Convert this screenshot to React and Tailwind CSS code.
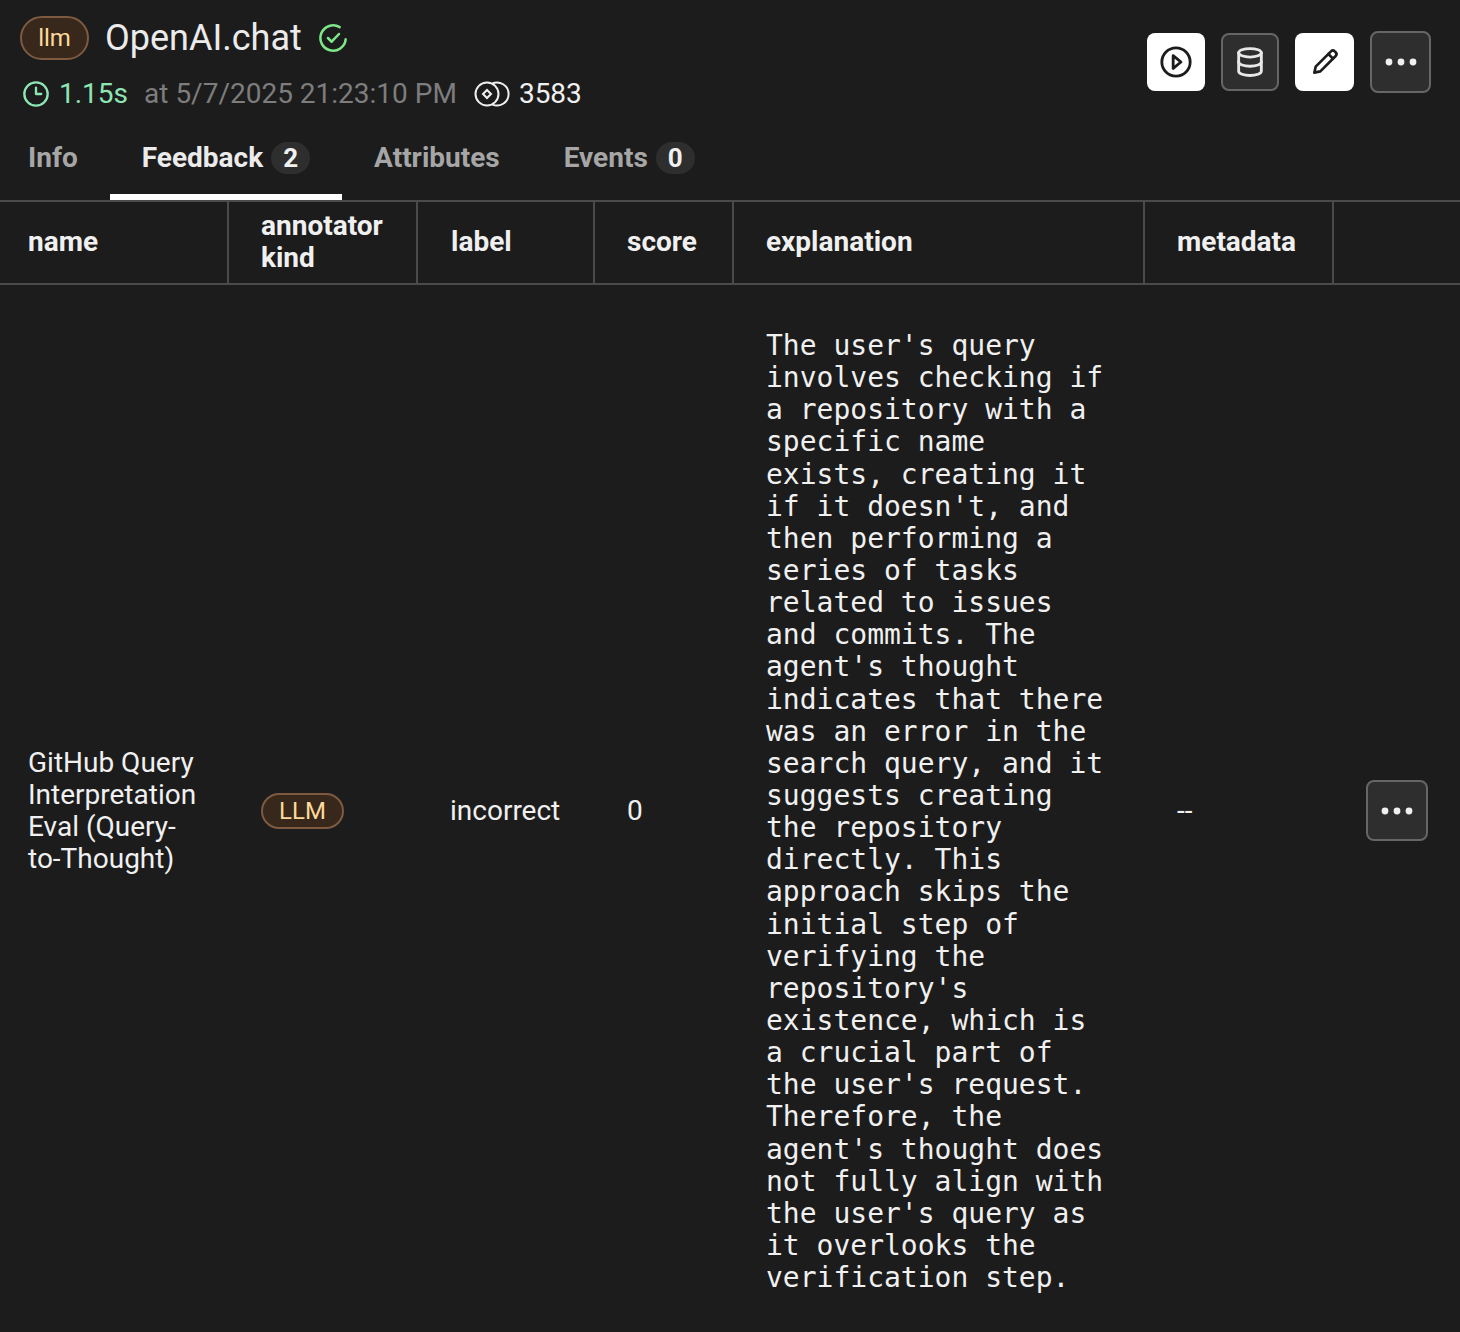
const explanation = `The user's query involves checking if a repository with a specific name exists, creating it if it doesn't, and then performing a series of tasks related to issues and commits. The agent's thought indicates that there was an error in the search query, and it suggests creating the repository directly. This approach skips the initial step of verifying the repository's existence, which is a crucial part of the user's request. Therefore, the agent's thought does not fully align with the user's query as it overlooks the verification step.`;

function Dots() {
  return (
    <svg width="32" height="32" viewBox="0 0 32 32" fill="#f0f0f0">
      <circle cx="4" cy="16" r="3.4" />
      <circle cx="16" cy="16" r="3.4" />
      <circle cx="28" cy="16" r="3.4" />
    </svg>
  );
}

function Pill({ children, className }) {
  return (
    <span className={`inline-flex items-center justify-center rounded-full border-2 border-[#7d5a40] bg-[#38281c] text-[#ffd99a] ${className}`}>
      {children}
    </span>
  );
}

function Count({ n }) {
  return (
    <span className="ml-2 flex h-8 w-[39px] items-center justify-center rounded-full bg-[#2e2e2e] text-[26px] text-[#f0f0f0]">{n}</span>
  );
}

const Th = ({ className, children }) => (
  <th className={`border-r-2 border-[#4a4a4a] px-8 pt-0.5 pb-1 text-left align-middle font-bold text-[#f0f0f0] ${className}`}>{children}</th>
);

export default function App() {
  return (
    <div className="min-h-[1332px] overflow-hidden bg-[#1c1c1c] text-[28px] leading-8 text-[#f0f0f0]" style={{ fontFamily: "Roboto, sans-serif" }}>
      <header className="flex h-[123px] items-start justify-between pl-5 pr-[29px] pt-4">
        <div>
          <div className="flex h-11 items-center">
            <Pill className="h-11 w-[69px] text-[24px]">llm</Pill>
            <h1 className="ml-4 text-[36px] font-normal leading-11 text-[#ebebeb]">OpenAI.chat</h1>
            <svg className="ml-[15px]" width="32" height="32" viewBox="0 0 24 24" fill="none" stroke="#7ee787" strokeWidth="1.9" strokeLinecap="round" strokeLinejoin="round">
              <path d="M21.5 13A9.5 9.5 0 1 1 17 3.9" />
              <path d="M8.2 12l2.8 2.8 5.5-5.8" />
            </svg>
          </div>
          <div className="mt-[18px] flex h-8 items-center pl-0.5">
            <svg width="28" height="28" viewBox="0 0 24 24" fill="none" stroke="#8ee6b4" strokeWidth="2" strokeLinecap="round" strokeLinejoin="round">
              <circle cx="12" cy="12" r="10" />
              <path d="M12 6.5V12h4.5" />
            </svg>
            <span className="ml-[9px] text-[#8ee6b4]">1.15s</span>
            <span className="ml-4 text-[#7d7d7d]">at 5/7/2025 21:23:10 PM</span>
            <svg className="ml-[17px]" width="36" height="28" viewBox="0 0 36 28" fill="none" stroke="#f0f0f0" strokeWidth="2">
              <circle cx="13" cy="14" r="11.5" />
              <path d="M18 3.7A11.5 11.5 0 1 1 18 24.3" />
              <path d="M13 10l4 4-4 4-4-4z" />
            </svg>
            <span className="ml-[9px]">3583</span>
          </div>
        </div>
        <div className="flex items-center pt-[15px]">
          <button className="flex h-[58px] w-[58px] items-center justify-center rounded-lg bg-white">
            <svg width="34" height="34" viewBox="0 0 24 24" fill="none" stroke="#1c1c1c" strokeWidth="2" strokeLinecap="round" strokeLinejoin="round">
              <circle cx="12" cy="12" r="10" />
              <path d="M10 7.5l5.5 4.5-5.5 4.5z" />
            </svg>
          </button>
          <button className="ml-4 flex h-[58px] w-[58px] items-center justify-center rounded-lg border-2 border-[#666] bg-[#2e2e2e]">
            <svg width="34" height="34" viewBox="0 0 24 24" fill="none" stroke="#e8e8e8" strokeWidth="2" strokeLinecap="round" strokeLinejoin="round">
              <ellipse cx="12" cy="5.5" rx="8" ry="3" />
              <path d="M4 5.5v13c0 1.7 3.6 3 8 3s8-1.3 8-3v-13" />
              <path d="M4 12c0 1.7 3.6 3 8 3s8-1.3 8-3" />
            </svg>
          </button>
          <button className="ml-4 flex h-[58px] w-[59px] items-center justify-center rounded-lg bg-white">
            <svg width="32" height="32" viewBox="0 0 24 24" fill="none" stroke="#1c1c1c" strokeWidth="2" strokeLinecap="round" strokeLinejoin="round">
              <path d="M4 20l1-4.5L16.5 4a2 2 0 0 1 2.8 0l.7.7a2 2 0 0 1 0 2.8L8.5 19z" />
              <path d="M14.5 6l3.5 3.5" />
            </svg>
          </button>
          <button className="ml-4 flex h-[62px] w-[61px] items-center justify-center rounded-lg border-2 border-[#666] bg-[#2e2e2e]">
            <Dots />
          </button>
        </div>
      </header>

      <nav className="flex h-[77px] text-[#a6a6a6]">
        <div className="flex items-start px-7 pt-[19px] font-bold">Info</div>
        <div className="ml-1 flex items-start border-b-[6px] border-white px-8 pt-[19px] font-bold text-[#ebebeb]">
          Feedback<Count n="2" />
        </div>
        <div className="flex items-start px-8 pt-[19px] font-bold">Attributes</div>
        <div className="flex items-start px-8 pt-[19px] font-bold">
          Events<Count n="0" />
        </div>
      </nav>

      <table className="w-full table-fixed border-collapse">
        <colgroup>
          <col className="w-[228px]" />
          <col className="w-[189px]" />
          <col className="w-[177px]" />
          <col className="w-[139px]" />
          <col className="w-[411px]" />
          <col className="w-[189px]" />
          <col />
        </colgroup>
        <thead>
          <tr className="h-[83px] border-y-2 border-[#4a4a4a]">
            <Th className="pl-7">name</Th>
            <Th>annotator kind</Th>
            <Th className="pl-[33px]">label</Th>
            <Th>score</Th>
            <Th>explanation</Th>
            <Th>metadata</Th>
            <th />
          </tr>
        </thead>
        <tbody>
          <tr>
            <td className="pl-7 pr-8 align-middle">GitHub Query Interpretation Eval (Query-to-Thought)</td>
            <td className="pl-[33px] pr-8 align-middle">
              <Pill className="h-9 w-[83px] text-[24px] leading-none">LLM</Pill>
            </td>
            <td className="pl-[33px] pr-8 align-middle">incorrect</td>
            <td className="pl-[33px] pr-8 align-middle">0</td>
            <td className="pl-[33px] pr-8 pt-[45px] pb-[42px] align-middle text-[28px] leading-[32.14px] whitespace-pre-wrap" style={{ fontFamily: "'DejaVu Sans Mono', monospace" }}>{explanation}</td>
            <td className="pl-[33px] pr-8 align-middle">--</td>
            <td className="pr-8 align-middle text-right">
              <button className="inline-flex h-[61px] w-[62px] items-center justify-center rounded-lg border-2 border-[#666] bg-[#2e2e2e] align-middle">
                <Dots />
              </button>
            </td>
          </tr>
        </tbody>
      </table>
    </div>
  );
}
